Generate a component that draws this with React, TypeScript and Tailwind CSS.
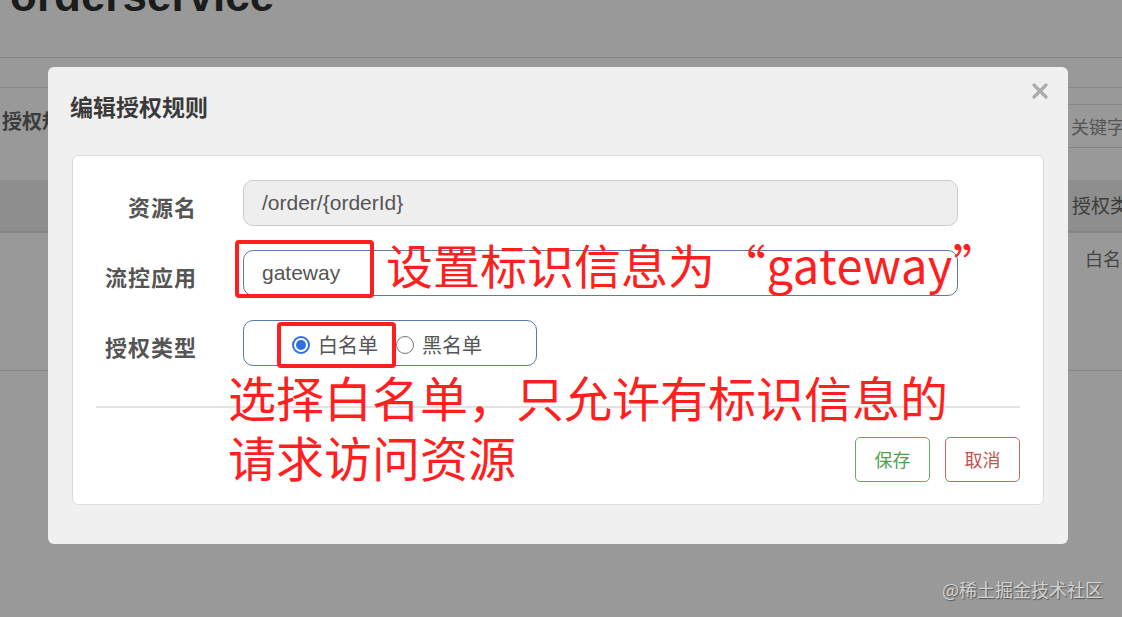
import React from "react"

const cjk = "font-['Noto_Sans_CJK_SC','Noto_Sans',sans-serif]"

function Radio({ checked }: { checked?: boolean }) {
  if (checked) {
    return (
      <span className="flex h-[18px] w-[18px] shrink-0 items-center justify-center rounded-full border-2 border-[#2f6fe4] bg-white">
        <span className="h-[10px] w-[10px] rounded-full bg-[#2f6fe4]" />
      </span>
    )
  }
  return <span className="block h-[18px] w-[18px] shrink-0 rounded-full border border-[#767676] bg-white" />
}

export default function App() {
  return (
    <div className={`relative h-[617px] w-[1122px] overflow-hidden bg-[#999999] ${cjk}`}>
      {/* page behind the overlay */}
      <div className="h-[58px] overflow-hidden border-b border-[#878787] pl-[10px]">
        <h1 className="-mt-[26px] font-['Liberation_Sans',sans-serif] text-[44px] font-bold leading-none text-[#1c1c1c]">
          orderservice
        </h1>
      </div>
      <div className="h-[30px] border-b border-[#8a8a8a]" />
      <div className="flex h-[92px] items-start justify-between">
        <div className="pl-[2px] pt-[18px] text-[20px] font-bold text-[#3c3c3c]">授权规则</div>
        <div className="mt-[16px] flex h-[44px] w-[60px] items-center border-y border-l border-[#858585] pl-[8px] text-[18px] whitespace-nowrap text-[#555]">
          关键字
        </div>
      </div>
      <div className="flex h-[53px] items-center border-b-2 border-[#858585] bg-[#8e8e8e]">
        <div className="flex-1" />
        <div className="w-[50px] whitespace-nowrap text-[19px] text-[#3c3c3c]">授权类型</div>
      </div>
      <div className="flex h-[138px] border-b border-[#858585]">
        <div className="flex-1" />
        <div className="w-[37px] whitespace-nowrap pt-[12px] text-[18px] text-[#444]">白名单</div>
      </div>

      {/* modal */}
      <div className="absolute left-[48px] top-[67px] flex h-[477px] w-[1020px] flex-col rounded-[6px] bg-[#f0f0f0]">
        <div className="flex h-[88px] items-start justify-between pl-[22px] pr-[20px]">
          <div className="pt-[22px] text-[23px] font-bold text-[#3a3a3a]">编辑授权规则</div>
          <svg width="16" height="16" viewBox="0 0 16 16" className="mt-[16px]">
            <path d="M2 2 L14 14 M14 2 L2 14" stroke="#acacac" strokeWidth="3.2" strokeLinecap="round" />
          </svg>
        </div>
        <div className="mx-[24px] h-[350px] rounded-[6px] border border-[#dcdcdc] bg-white px-[23px] pt-[24px]">
          <div className="grid grid-cols-[101px_715px] gap-x-[46px] gap-y-[24px]">
            <div className="flex h-[46px] items-center justify-end pt-[7px] text-[22px] font-bold tracking-[1px] text-[#555]">资源名</div>
            <div className="flex h-[46px] items-center rounded-[10px] border border-[#cccccc] bg-[#eeeeee] pl-[18px] font-['Liberation_Sans',sans-serif] text-[21px] text-[#555]">
              /order/{"{orderId}"}
            </div>
            <div className="flex h-[46px] items-center justify-end pt-[7px] text-[22px] font-bold tracking-[1px] text-[#555]">流控应用</div>
            <div className="flex h-[46px] items-center rounded-[10px] border border-[#5a79ad] bg-white pl-[18px] font-['Liberation_Sans',sans-serif] text-[21px] text-[#555]">
              gateway
            </div>
            <div className="flex h-[46px] items-center justify-end pt-[7px] text-[22px] font-bold tracking-[1px] text-[#555]">授权类型</div>
            <div className="flex h-[46px] w-[294px] items-center rounded-[10px] border border-[#5a79ad] bg-white pl-[48px] pt-[4px] text-[20px] text-[#555]">
              <Radio checked />
              <span className="ml-[8px]">白名单</span>
              <span className="ml-[18px] flex"><Radio /></span>
              <span className="ml-[8px]">黑名单</span>
            </div>
          </div>
          <div className="mt-[40px] h-[2px] bg-[#e3e3e3]" />
          <div className="mt-[29px] flex justify-end gap-[15px]">
            <button className="h-[45px] w-[75px] rounded-[5px] border border-[#5fae5f] text-[18px] text-[#4f9f4f]">保存</button>
            <button className="h-[45px] w-[75px] rounded-[5px] border border-[#cc6663] text-[18px] text-[#c4524f]">取消</button>
          </div>
        </div>
      </div>

      {/* annotations */}
      <div className="absolute left-[235px] top-[240px] h-[58px] w-[139px] rounded-[4px] border-[4px] border-[#ff1f1f]" />
      <div className="absolute left-[277px] top-[322px] h-[46px] w-[119px] rounded-[4px] border-[4px] border-[#ff1f1f]" />
      <div className="absolute left-[386px] top-[240px] whitespace-nowrap text-[47px] leading-none text-[#ff1f1f]">
        设置标识信息为<span className="ml-[4px] tracking-[0.5px]">“gateway”</span>
      </div>
      <div className="absolute left-[228px] top-[366px] whitespace-nowrap text-[48px] leading-[60px] text-[#ff1f1f]">
        <div>选择白名单，只允许有标识信息的</div>
        <div>请求访问资源</div>
      </div>

      <div className="absolute left-[942px] top-[576px] text-[18px] text-[#d2d2d2] [text-shadow:1px_1px_1px_rgba(0,0,0,0.45)]">
        @稀土掘金技术社区
      </div>
    </div>
  )
}
